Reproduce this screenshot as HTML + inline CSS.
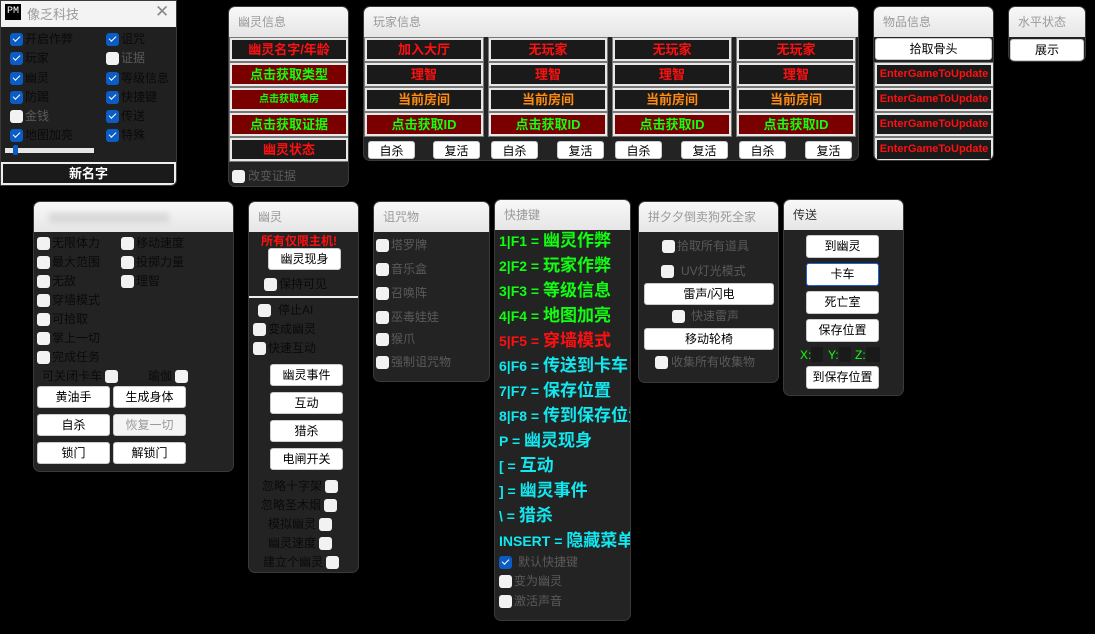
<!DOCTYPE html>
<html><head><meta charset="utf-8"><style>
*{box-sizing:border-box;margin:0;padding:0}
body{width:1095px;height:634px;background:#000;position:relative;overflow:hidden;font-family:"Liberation Sans","Noto Sans CJK SC",sans-serif;font-size:12px}
.p{position:absolute;background:#232323;border-radius:7px;overflow:hidden;border:1px solid #3a3a3a}
.h{position:absolute;left:0;right:0;top:0;height:30px;background:linear-gradient(#f8f8f8,#e6e6e6);color:#9a9a9a;font-size:12px;padding:6px 0 0 9px}
.a{position:absolute;white-space:nowrap}
.cb{position:absolute;width:13px;height:13px;border-radius:3px;background:#f2f2f2}
.cb.on{background:#0b5cc4}
.cb.on::after{content:"";position:absolute;left:3px;top:3px;width:6px;height:3px;border-left:1.5px solid #fff;border-bottom:1.5px solid #fff;transform:rotate(-45deg)}
.l{position:absolute;white-space:nowrap;font-size:12px;color:#0a0a0a;line-height:14px}
.g{color:#5a5a5a}
.b{position:absolute;background:#fff;border-radius:3px;color:#000;font-size:12px;text-align:center;border:1px solid #ccc}
.r{position:absolute;border:2px solid #e8e8e8;outline:1px solid #777;text-align:center;font-weight:bold;font-size:13px;line-height:19px;background:#1a1a1a;white-space:nowrap;overflow:hidden}
.dr{background:#7a0000}
.red{color:#ff1010}.grn{color:#10ff10}.org{color:#ff8a10}
.k{position:absolute;left:4px;font-weight:bold;white-space:nowrap;line-height:22px}
.k small{font-size:14px}.k span{font-size:17px}
</style></head><body>

<div class="p" style="left:0;top:0;width:177px;height:186px;border-radius:0 0 6px 0;background:#202020">
 <div class="h" style="height:26px;padding:3px 0 0 26px;font-size:13px;background:#f3f3f3">像乏科技</div>
 <div class="a" style="left:4px;top:3px;width:16px;height:16px;background:#000;color:#fff;font-size:10px;line-height:16px;text-align:center;font-family:'Liberation Mono',monospace">PM</div>
 <div class="a" style="left:154px;top:1px;color:#888;font-size:17px">✕</div>
 <div class="cb on" style="left:9px;top:32px"></div><div class="l" style="left:24px;top:31px">开启作弊</div>
 <div class="cb on" style="left:105px;top:32px"></div><div class="l" style="left:120px;top:31px">诅咒</div>
 <div class="cb on" style="left:9px;top:51px"></div><div class="l" style="left:24px;top:50px">玩家</div>
 <div class="cb" style="left:105px;top:51px"></div><div class="l g" style="left:120px;top:50px">证据</div>
 <div class="cb on" style="left:9px;top:71px"></div><div class="l" style="left:24px;top:70px">幽灵</div>
 <div class="cb on" style="left:105px;top:71px"></div><div class="l" style="left:120px;top:70px">等级信息</div>
 <div class="cb on" style="left:9px;top:90px"></div><div class="l" style="left:24px;top:89px">防踢</div>
 <div class="cb on" style="left:105px;top:90px"></div><div class="l" style="left:120px;top:89px">快捷键</div>
 <div class="cb" style="left:9px;top:109px"></div><div class="l g" style="left:24px;top:108px">金钱</div>
 <div class="cb on" style="left:105px;top:109px"></div><div class="l" style="left:120px;top:108px">传送</div>
 <div class="cb on" style="left:9px;top:128px"></div><div class="l" style="left:24px;top:127px">地图加亮</div>
 <div class="cb on" style="left:105px;top:128px"></div><div class="l" style="left:120px;top:127px">特殊</div>
 <div class="a" style="left:4px;top:147px;width:89px;height:5px;background:#e6e6e6"></div>
 <div class="a" style="left:12px;top:144px;width:5px;height:10px;background:#0b5cc4;border-radius:2px"></div>
 <div class="a" style="left:0;top:161px;width:175px;height:23px;border:2px solid #eee;background:#1a1a1a;color:#fff;font-weight:bold;font-size:13px;text-align:center;line-height:19px">新名字</div>
</div>

<div class="p" style="left:228px;top:6px;width:121px;height:181px">
 <div class="h">幽灵信息</div>
 <div class="r red" style="left:1px;top:31px;width:118px;height:23px">幽灵名字/年龄</div>
 <div class="r grn dr" style="left:1px;top:56px;width:118px;height:23px">点击获取类型</div>
 <div class="r grn dr" style="left:1px;top:81px;width:118px;height:23px;font-size:10px">点击获取鬼房</div>
 <div class="r grn dr" style="left:1px;top:106px;width:118px;height:23px">点击获取证据</div>
 <div class="r red" style="left:1px;top:131px;width:118px;height:23px">幽灵状态</div>
 <div class="cb" style="left:3px;top:163px"></div><div class="l g" style="left:19px;top:162px">改变证据</div>
</div>

<div class="p" style="left:363px;top:6px;width:496px;height:155px">
 <div class="h">玩家信息</div>
 <div class="r red" style="left:1px;top:31px;width:118px;height:23px">加入大厅</div>
 <div class="r red" style="left:125px;top:31px;width:118px;height:23px">无玩家</div>
 <div class="r red" style="left:249px;top:31px;width:118px;height:23px">无玩家</div>
 <div class="r red" style="left:373px;top:31px;width:118px;height:23px">无玩家</div>
 <div class="r red" style="left:1px;top:56px;width:118px;height:23px">理智</div>
 <div class="r red" style="left:125px;top:56px;width:118px;height:23px">理智</div>
 <div class="r red" style="left:249px;top:56px;width:118px;height:23px">理智</div>
 <div class="r red" style="left:373px;top:56px;width:118px;height:23px">理智</div>
 <div class="r org" style="left:1px;top:81px;width:118px;height:23px">当前房间</div>
 <div class="r org" style="left:125px;top:81px;width:118px;height:23px">当前房间</div>
 <div class="r org" style="left:249px;top:81px;width:118px;height:23px">当前房间</div>
 <div class="r org" style="left:373px;top:81px;width:118px;height:23px">当前房间</div>
 <div class="r grn dr" style="left:1px;top:106px;width:118px;height:23px">点击获取ID</div>
 <div class="r grn dr" style="left:125px;top:106px;width:118px;height:23px">点击获取ID</div>
 <div class="r grn dr" style="left:249px;top:106px;width:118px;height:23px">点击获取ID</div>
 <div class="r grn dr" style="left:373px;top:106px;width:118px;height:23px">点击获取ID</div>
 <div class="b" style="left:4px;top:134px;width:47px;height:18px">自杀</div>
 <div class="b" style="left:69px;top:134px;width:47px;height:18px">复活</div>
 <div class="b" style="left:127px;top:134px;width:47px;height:18px">自杀</div>
 <div class="b" style="left:193px;top:134px;width:47px;height:18px">复活</div>
 <div class="b" style="left:251px;top:134px;width:47px;height:18px">自杀</div>
 <div class="b" style="left:317px;top:134px;width:47px;height:18px">复活</div>
 <div class="b" style="left:375px;top:134px;width:47px;height:18px">自杀</div>
 <div class="b" style="left:441px;top:134px;width:47px;height:18px">复活</div>
</div>

<div class="p" style="left:873px;top:6px;width:121px;height:155px">
 <div class="h">物品信息</div>
 <div class="b" style="left:1px;top:31px;width:117px;height:22px;line-height:20px">拾取骨头</div>
 <div class="r red" style="left:1px;top:56px;width:118px;height:23px;font-size:11px">EnterGameToUpdate</div>
 <div class="r red" style="left:1px;top:81px;width:118px;height:23px;font-size:11px">EnterGameToUpdate</div>
 <div class="r red" style="left:1px;top:106px;width:118px;height:23px;font-size:11px">EnterGameToUpdate</div>
 <div class="r red" style="left:1px;top:131px;width:118px;height:23px;font-size:11px">EnterGameToUpdate</div>
</div>

<div class="p" style="left:1008px;top:6px;width:78px;height:56px">
 <div class="h">水平状态</div>
 <div class="b" style="left:1px;top:32px;width:74px;height:22px;line-height:20px">展示</div>
</div>

<div class="p" style="left:33px;top:201px;width:201px;height:271px">
 <div class="h"><div style="margin:5px 0 0 6px;width:120px;height:10px;background:#d8d8d8;filter:blur(3px)"></div></div>
 <div class="cb" style="left:3px;top:35px"></div><div class="l" style="left:18px;top:34px">无限体力</div>
 <div class="cb" style="left:87px;top:35px"></div><div class="l" style="left:102px;top:34px">移动速度</div>
 <div class="cb" style="left:3px;top:54px"></div><div class="l" style="left:18px;top:53px">最大范围</div>
 <div class="cb" style="left:87px;top:54px"></div><div class="l" style="left:102px;top:53px">投掷力量</div>
 <div class="cb" style="left:3px;top:73px"></div><div class="l" style="left:18px;top:72px">无敌</div>
 <div class="cb" style="left:87px;top:73px"></div><div class="l" style="left:102px;top:72px">理智</div>
 <div class="cb" style="left:3px;top:92px"></div><div class="l" style="left:18px;top:91px">穿墙模式</div>
 <div class="cb" style="left:3px;top:111px"></div><div class="l" style="left:18px;top:110px">可拾取</div>
 <div class="cb" style="left:3px;top:130px"></div><div class="l" style="left:18px;top:129px">掌上一切</div>
 <div class="cb" style="left:3px;top:149px"></div><div class="l" style="left:18px;top:148px">完成任务</div>
 <div class="l" style="left:8px;top:167px">可关闭卡车</div><div class="cb" style="left:71px;top:168px"></div>
 <div class="l" style="left:114px;top:167px">瑜伽</div><div class="cb" style="left:141px;top:168px"></div>
 <div class="b" style="left:3px;top:184px;width:73px;height:22px;line-height:20px">黄油手</div>
 <div class="b" style="left:79px;top:184px;width:73px;height:22px;line-height:20px">生成身体</div>
 <div class="b" style="left:3px;top:212px;width:73px;height:22px;line-height:20px">自杀</div>
 <div class="b" style="left:79px;top:212px;width:73px;height:22px;line-height:20px;background:#f4f4f4;color:#999">恢复一切</div>
 <div class="b" style="left:3px;top:240px;width:73px;height:22px;line-height:20px">锁门</div>
 <div class="b" style="left:79px;top:240px;width:73px;height:22px;line-height:20px">解锁门</div>
</div>

<div class="p" style="left:248px;top:201px;width:111px;height:372px">
 <div class="h">幽灵</div>
 <div class="a" style="left:12px;top:30px;color:#ff1010;font-weight:bold;font-size:12px">所有仅限主机!</div>
 <div class="b" style="left:19px;top:46px;width:73px;height:22px;line-height:20px">幽灵现身</div>
 <div class="cb" style="left:15px;top:76px"></div><div class="l" style="left:30px;top:75px">保持可见</div>
 <div class="a" style="left:0;top:94px;width:111px;height:2px;background:#eee"></div>
 <div class="cb" style="left:9px;top:102px"></div><div class="l" style="left:29px;top:101px">停止AI</div>
 <div class="cb" style="left:4px;top:121px"></div><div class="l" style="left:19px;top:120px">变成幽灵</div>
 <div class="cb" style="left:4px;top:140px"></div><div class="l" style="left:19px;top:139px">快速互动</div>
 <div class="b" style="left:21px;top:162px;width:73px;height:22px;line-height:20px">幽灵事件</div>
 <div class="b" style="left:21px;top:190px;width:73px;height:22px;line-height:20px">互动</div>
 <div class="b" style="left:21px;top:218px;width:73px;height:22px;line-height:20px">猎杀</div>
 <div class="b" style="left:21px;top:246px;width:73px;height:22px;line-height:20px">电闸开关</div>
 <div class="l" style="left:13px;top:277px">忽略十字架</div><div class="cb" style="left:76px;top:278px"></div>
 <div class="l" style="left:12px;top:296px">忽略圣木烟</div><div class="cb" style="left:75px;top:297px"></div>
 <div class="l" style="left:19px;top:315px">模拟幽灵</div><div class="cb" style="left:70px;top:316px"></div>
 <div class="l" style="left:19px;top:334px">幽灵速度</div><div class="cb" style="left:70px;top:335px"></div>
 <div class="l" style="left:14px;top:353px">建立个幽灵</div><div class="cb" style="left:77px;top:354px"></div>
</div>

<div class="p" style="left:373px;top:201px;width:117px;height:181px">
 <div class="h">诅咒物</div>
 <div class="cb" style="left:2px;top:37px"></div><div class="l g" style="left:17px;top:36px">塔罗牌</div>
 <div class="cb" style="left:2px;top:61px"></div><div class="l g" style="left:17px;top:60px">音乐盒</div>
 <div class="cb" style="left:2px;top:85px"></div><div class="l g" style="left:17px;top:84px">召唤阵</div>
 <div class="cb" style="left:2px;top:109px"></div><div class="l g" style="left:17px;top:108px">巫毒娃娃</div>
 <div class="cb" style="left:2px;top:131px"></div><div class="l g" style="left:17px;top:130px">猴爪</div>
 <div class="cb" style="left:2px;top:154px"></div><div class="l g" style="left:17px;top:153px">强制诅咒物</div>
</div>

<div class="p" style="left:494px;top:199px;width:137px;height:422px">
 <div class="h">快捷键</div>
 <div class="k grn" style="top:30px"><small>1|F1 = </small><span>幽灵作弊</span></div>
 <div class="k grn" style="top:55px"><small>2|F2 = </small><span>玩家作弊</span></div>
 <div class="k grn" style="top:80px"><small>3|F3 = </small><span>等级信息</span></div>
 <div class="k grn" style="top:105px"><small>4|F4 = </small><span>地图加亮</span></div>
 <div class="k red" style="top:130px"><small>5|F5 = </small><span>穿墙模式</span></div>
 <div class="k" style="top:155px;color:#10e8f0"><small>6|F6 = </small><span>传送到卡车</span></div>
 <div class="k" style="top:180px;color:#10e8f0"><small>7|F7 = </small><span>保存位置</span></div>
 <div class="k" style="top:205px;color:#10e8f0"><small>8|F8 = </small><span>传到保存位置</span></div>
 <div class="k" style="top:230px;color:#10e8f0"><small>P = </small><span>幽灵现身</span></div>
 <div class="k" style="top:255px;color:#10e8f0"><small>[ = </small><span>互动</span></div>
 <div class="k" style="top:280px;color:#10e8f0"><small>] = </small><span>幽灵事件</span></div>
 <div class="k" style="top:305px;color:#10e8f0"><small>\ = </small><span>猎杀</span></div>
 <div class="k" style="top:330px;color:#10e8f0"><small>INSERT = </small><span>隐藏菜单</span></div>
 <div class="cb on" style="left:4px;top:356px"></div><div class="l g" style="left:23px;top:355px">默认快捷键</div>
 <div class="cb" style="left:4px;top:375px"></div><div class="l g" style="left:19px;top:374px">变为幽灵</div>
 <div class="cb" style="left:4px;top:395px"></div><div class="l g" style="left:19px;top:394px">激活声音</div>
</div>

<div class="p" style="left:638px;top:201px;width:141px;height:182px">
 <div class="h">拼夕夕倒卖狗死全家</div>
 <div class="cb" style="left:23px;top:38px"></div><div class="l g" style="left:38px;top:37px">拾取所有道具</div>
 <div class="cb" style="left:22px;top:63px"></div><div class="l g" style="left:42px;top:62px">UV灯光模式</div>
 <div class="b" style="left:5px;top:81px;width:130px;height:22px;line-height:20px">雷声/闪电</div>
 <div class="cb" style="left:33px;top:108px"></div><div class="l g" style="left:52px;top:107px">快速雷声</div>
 <div class="b" style="left:5px;top:126px;width:130px;height:22px;line-height:20px">移动轮椅</div>
 <div class="cb" style="left:16px;top:154px"></div><div class="l g" style="left:32px;top:153px">收集所有收集物</div>
</div>

<div class="p" style="left:783px;top:199px;width:121px;height:197px">
 <div class="h" style="color:#333">传送</div>
 <div class="b" style="left:22px;top:35px;width:73px;height:23px;line-height:21px">到幽灵</div>
 <div class="b" style="left:22px;top:63px;width:73px;height:23px;line-height:21px;border:1px solid #1b64d8">卡车</div>
 <div class="b" style="left:22px;top:91px;width:73px;height:23px;line-height:21px">死亡室</div>
 <div class="b" style="left:22px;top:119px;width:73px;height:23px;line-height:21px">保存位置</div>
 <div class="a" style="left:16px;top:148px;color:#10ff10;font-size:12px">X:</div>
 <div class="a" style="left:27px;top:147px;width:12px;height:15px;background:#1a1a1a"></div>
 <div class="a" style="left:44px;top:148px;color:#10ff10;font-size:12px">Y:</div>
 <div class="a" style="left:55px;top:147px;width:12px;height:15px;background:#1a1a1a"></div>
 <div class="a" style="left:71px;top:148px;color:#10ff10;font-size:12px">Z:</div>
 <div class="a" style="left:82px;top:147px;width:14px;height:15px;background:#1a1a1a"></div>
 <div class="b" style="left:22px;top:166px;width:73px;height:23px;line-height:21px">到保存位置</div>
</div>
</body></html>
